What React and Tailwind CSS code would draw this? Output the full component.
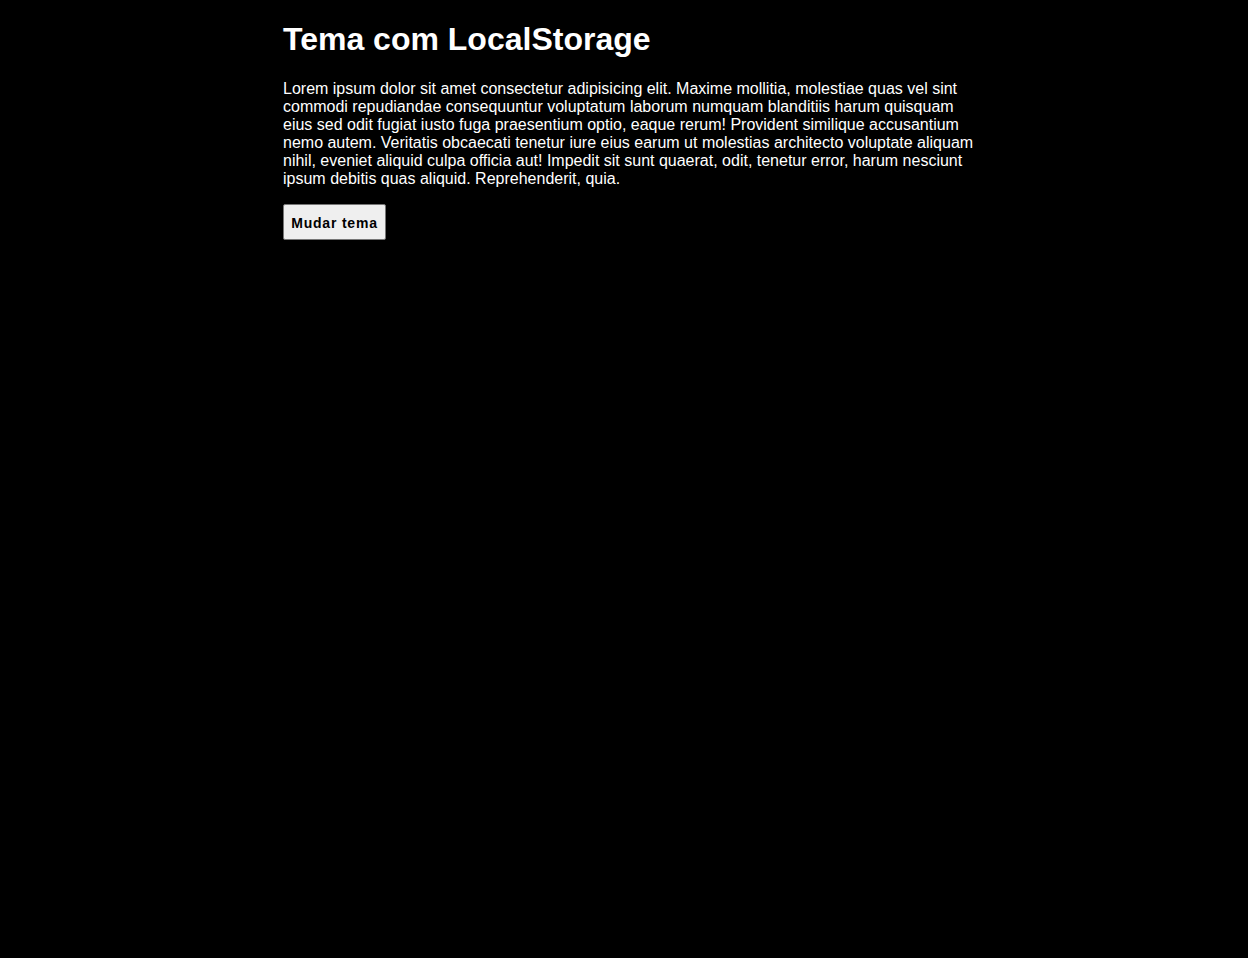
export default function App() {
  return (
    <div className="min-h-[958px] bg-black text-white font-['Liberation_Sans',Arial,sans-serif]">
      <div className="pl-[283px]">
        <div className="w-[696px] pt-[21px]">
          <h1 className="text-[32px] leading-[37px] font-bold">Tema com LocalStorage</h1>
          <p className="mt-[22px] text-[16px] leading-[18px]">
            Lorem ipsum dolor sit amet consectetur adipisicing elit. Maxime mollitia, molestiae quas vel sint commodi repudiandae consequuntur voluptatum laborum numquam blanditiis harum quisquam eius sed odit fugiat iusto fuga praesentium optio, eaque rerum! Provident similique accusantium nemo autem. Veritatis obcaecati tenetur iure eius earum ut molestias architecto voluptate aliquam nihil, eveniet aliquid culpa officia aut! Impedit sit sunt quaerat, odit, tenetur error, harum nesciunt ipsum debitis quas aliquid. Reprehenderit, quia.
          </p>
          <button className="mt-4 h-[36px] w-[103px] pt-[2px] border border-[#767676] bg-[#efefef] rounded-[2px] text-black text-[14px] tracking-[0.8px] font-bold">
            Mudar tema
          </button>
        </div>
      </div>
    </div>
  );
}
